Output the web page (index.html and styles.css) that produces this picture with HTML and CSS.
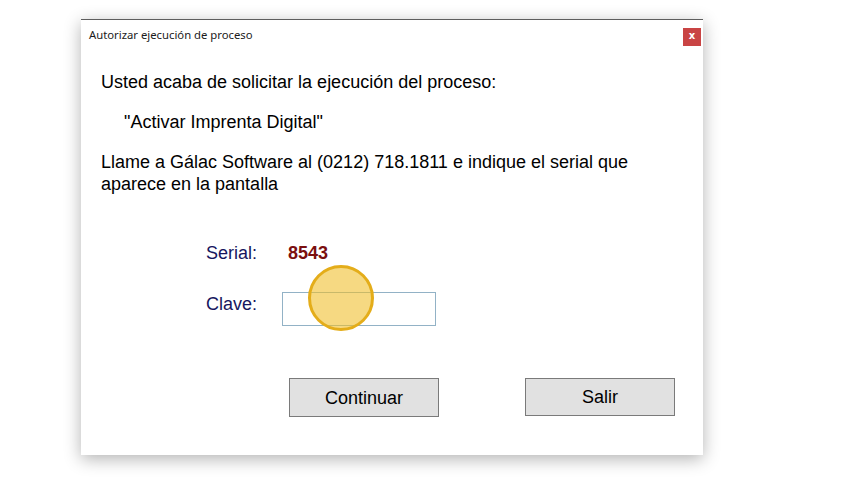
FILE: index.html
```html
<!DOCTYPE html>
<html lang="es">
<head>
<meta charset="utf-8">
<title>Autorizar ejecución de proceso</title>
<link rel="stylesheet" href="styles.css">
</head>
<body>
<div class="window">
  <div class="titlebar">
    <span class="title">Autorizar ejecución de proceso</span>
    <span class="close">x</span>
  </div>
  <div class="content">
    <p class="line first">Usted acaba de solicitar la ejecución del proceso:</p>
    <p class="line process">"Activar Imprenta Digital"</p>
    <p class="line call">Llame a Gálac Software al (0212) 718.1811 e indique el serial que<br>aparece en la pantalla</p>
    <div class="row serial-row">
      <span class="label">Serial:</span>
      <span class="serial">8543</span>
    </div>
    <div class="row key-row">
      <span class="label">Clave:</span>
      <span class="input-wrap">
        <input class="key" type="text">
        <span class="cursor"></span>
      </span>
    </div>
    <div class="buttons">
      <button class="btn btn-continue">Continuar</button>
      <button class="btn btn-exit">Salir</button>
    </div>
  </div>
</div>
</body>
</html>
```

FILE: styles.css
```css
html, body {
  margin: 0;
  background: #ffffff;
}
body {
  padding: 19px 0 25px 81px;
  font-family: "Liberation Sans", Arial, sans-serif;
}
.window {
  width: 622px;
  height: 436px;
  box-sizing: border-box;
  background: #ffffff;
  border-top: 1px solid #5e5e5e;
  box-shadow: 0 4px 16px rgba(0, 0, 0, 0.3);
  display: flex;
  flex-direction: column;
}
.titlebar {
  height: 31px;
  display: flex;
  align-items: center;
  justify-content: space-between;
  padding: 0 2px 0 8px;
}
.title {
  font-family: "Noto Sans", "Open Sans", sans-serif;
  font-size: 11.3px;
  color: #1b1b1b;
  margin-top: -2px;
}
.close {
  width: 18px;
  height: 18px;
  margin-top: 2px;
  background: #c94444;
  color: #ffffff;
  font-family: "DejaVu Sans", sans-serif;
  font-size: 10px;
  font-weight: bold;
  display: flex;
  align-items: center;
  justify-content: center;
  line-height: 1;
  padding-bottom: 2px;
  box-sizing: border-box;
}
.content {
  padding-left: 20px;
  display: flex;
  flex-direction: column;
  font-size: 18px;
  line-height: 22px;
  color: #000000;
}
.line {
  margin: 0;
}
.first {
  margin-top: 20px;
}
.process {
  margin-top: 18px;
  padding-left: 23px;
}
.call {
  margin-top: 18px;
}
.row {
  display: flex;
  padding-left: 105px;
}
.serial-row {
  margin-top: 47px;
}
.label {
  width: 82px;
  color: #16165e;
}
.serial {
  color: #7b0f0f;
  font-weight: bold;
}
.key-row {
  margin-top: 28px;
  align-items: flex-start;
}
.key-row .label {
  width: 76px;
  margin-top: 1px;
}
.input-wrap {
  position: relative;
  display: block;
}
.key {
  display: block;
  width: 154px;
  height: 34px;
  box-sizing: border-box;
  border: 1px solid #92b2c6;
  margin: 0;
  padding: 0 4px;
  outline: none;
  font: inherit;
}
.cursor {
  position: absolute;
  left: 26px;
  top: -27px;
  width: 66px;
  height: 66px;
  box-sizing: border-box;
  border-radius: 50%;
  border: 3px solid #e4ad1a;
  background: rgba(240, 190, 40, 0.58);
}
.buttons {
  display: flex;
  align-items: flex-start;
  margin-top: 52px;
  padding-left: 188px;
  gap: 86px;
}
.btn {
  width: 150px;
  height: 39px;
  box-sizing: border-box;
  background: #e1e1e1;
  border: 1px solid #7a7a7a;
  border-radius: 0;
  font-family: "Liberation Sans", Arial, sans-serif;
  font-size: 18px;
  color: #000000;
  padding: 0;
  margin: 0;
}
.btn-continue {
  padding-top: 2px;
}
.btn-exit {
  height: 38px;
}
```
